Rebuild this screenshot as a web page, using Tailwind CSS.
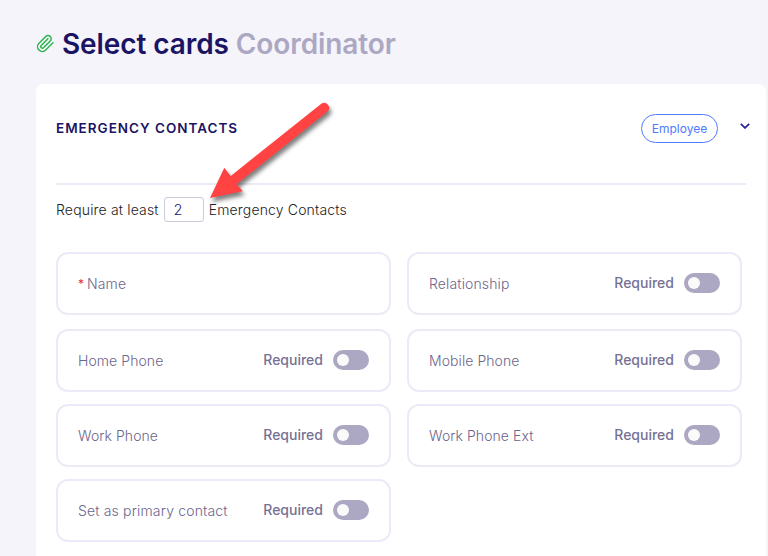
<!DOCTYPE html>
<html lang="en">
  <head>
    <meta charset="UTF-8" />
    <meta name="viewport" content="width=device-width, initial-scale=1.0" />
    <title>Select cards</title>
    <script src="https://cdn.jsdelivr.net/npm/@tailwindcss/browser@4"></script>
  </head>
  <body class="h-[556px] overflow-hidden bg-[#f5f4fa] font-['Inter',sans-serif] text-sm text-[#767194]">
    <div class="relative flex h-[556px] flex-col pr-[2px] pl-9">
      <!-- Page title -->
      <header class="flex h-21 shrink-0 items-center pt-1">
        <svg class="mr-[7px] mb-[2px] size-[19px] text-[#28b34b]" viewBox="0 0 24 24" fill="none" stroke="currentColor" stroke-width="1.8" stroke-linecap="round" stroke-linejoin="round">
          <path d="m21.44 11.05-9.19 9.19a6 6 0 0 1-8.49-8.49l8.57-8.57A4 4 0 1 1 18 8.84l-8.59 8.57a2 2 0 0 1-2.83-2.83l8.49-8.48" />
        </svg>
        <h1 class="text-[28px] leading-9 font-semibold tracking-[-0.09px] text-[#1b1464]">
          Select cards <span class="text-[#aca8c3]">Coordinator</span>
        </h1>
      </header>

      <main class="h-[520px] rounded-t-lg bg-white px-5">
        <div class="flex h-[101px] items-center border-b-2 border-[#eceaf6] pb-[11px]">
          <h2 class="pt-[2px] text-[13.5px] font-semibold tracking-[0.073em] text-[#1b1464]">EMERGENCY CONTACTS</h2>
          <span class="ml-auto flex h-[29px] w-[77px] items-center justify-center rounded-full border border-[#4f7cff] pt-px text-xs text-[#4f7cff]">Employee</span>
          <svg class="mr-[-4px] mb-1 ml-[22px] h-[6px] w-[10px]" viewBox="0 0 10 6" fill="none" stroke="#2b249b" stroke-width="1.8">
            <path d="m.8.9 4.2 4 4.2-4" />
          </svg>
        </div>

        <div class="mt-3 flex h-[25px] items-center gap-[5px] font-light text-[#222]">
          <span class="tracking-[0.012em]">Require at least</span>
          <input type="text" value="2" class="h-[25px] w-10 rounded-[3px] border border-[#ccccdd] px-[9px] font-light text-[#1b1464]" />
          <span class="tracking-[0.011em]">Emergency Contacts</span>
        </div>

        <!-- Contact fields -->
        <div class="mt-[30px] grid w-[686px] grid-cols-2 gap-x-4 gap-y-3 text-[#6b668c]">
          <div class="mb-[2px] flex h-[63px] items-center rounded-xl border-2 border-[#eceaf6] px-5">
            <span class="mr-[3px] text-xs text-[#e5294f]">*</span><span class="font-light tracking-[0.01em]">Name</span>
          </div>
          <div class="mb-[2px] flex h-[63px] items-center rounded-xl border-2 border-[#eceaf6] px-5">
            <span class="font-light tracking-[0.01em]">Relationship</span>
            <span class="mb-[2px] ml-auto font-medium text-[#767194]">Required</span>
            <span class="mb-px ml-[10px] flex h-5 w-9 items-center rounded-full bg-[#aca8c3] px-1"><span class="size-3 rounded-full bg-[#fafafa]"></span></span>
          </div>
          <div class="flex h-[63px] items-center rounded-xl border-2 border-[#eceaf6] px-5">
            <span class="font-light tracking-[0.005em]">Home Phone</span>
            <span class="mb-[2px] ml-auto font-medium text-[#767194]">Required</span>
            <span class="mb-px ml-[10px] flex h-5 w-9 items-center rounded-full bg-[#aca8c3] px-1"><span class="size-3 rounded-full bg-[#fafafa]"></span></span>
          </div>
          <div class="flex h-[63px] items-center rounded-xl border-2 border-[#eceaf6] px-5">
            <span class="font-light tracking-[0.005em]">Mobile Phone</span>
            <span class="mb-[2px] ml-auto font-medium text-[#767194]">Required</span>
            <span class="mb-px ml-[10px] flex h-5 w-9 items-center rounded-full bg-[#aca8c3] px-1"><span class="size-3 rounded-full bg-[#fafafa]"></span></span>
          </div>
          <div class="flex h-[63px] items-center rounded-xl border-2 border-[#eceaf6] px-5">
            <span class="font-light tracking-[0.005em]">Work Phone</span>
            <span class="mb-[2px] ml-auto font-medium text-[#767194]">Required</span>
            <span class="mb-px ml-[10px] flex h-5 w-9 items-center rounded-full bg-[#aca8c3] px-1"><span class="size-3 rounded-full bg-[#fafafa]"></span></span>
          </div>
          <div class="flex h-[63px] items-center rounded-xl border-2 border-[#eceaf6] px-5">
            <span class="font-light tracking-[0.005em]">Work Phone Ext</span>
            <span class="mb-[2px] ml-auto font-medium text-[#767194]">Required</span>
            <span class="mb-px ml-[10px] flex h-5 w-9 items-center rounded-full bg-[#aca8c3] px-1"><span class="size-3 rounded-full bg-[#fafafa]"></span></span>
          </div>
          <div class="flex h-[63px] items-center rounded-xl border-2 border-[#eceaf6] px-5">
            <span class="font-light tracking-[0.012em]">Set as primary contact</span>
            <span class="mb-[2px] ml-auto font-medium text-[#767194]">Required</span>
            <span class="mb-px ml-[10px] flex h-5 w-9 items-center rounded-full bg-[#aca8c3] px-1"><span class="size-3 rounded-full bg-[#fafafa]"></span></span>
          </div>
        </div>
      </main>

      <!-- Arrow pointing at the number field -->
      <svg class="pointer-events-none absolute top-[90px] left-[200px] h-[125px] w-[145px] overflow-visible drop-shadow-[2px_4px_2px_rgba(0,0,0,0.5)]" viewBox="0 0 145 125" fill="#ff4343">
        <path d="M10 108 24.3 77.7l6.4 8.3 90.6-72.2a5 5 0 0 1 6.2 7.8L36.7 94.3l6 6.9z" />
      </svg>
    </div>
  </body>
</html>
